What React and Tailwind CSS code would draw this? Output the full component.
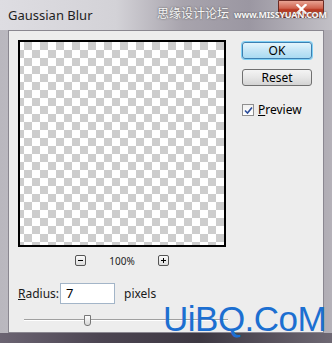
import React from "react";

function Checker() {
  return (
    <div className="w-[208px] h-[207px] border-2 border-black bg-white bg-[repeating-conic-gradient(#cdcdcd_0%_25%,#ffffff_0%_50%)] bg-[length:16px_16px] bg-[position:-4px_0px]" />
  );
}

export default function App() {
  return (
    <div
      className="relative w-[332px] h-[343px] overflow-hidden bg-[linear-gradient(90deg,#b9b7be_0%,#c8c6cc_30%,#9a96a0_55%,#8d8993_75%,#b4b1b8_100%)]"
      style={{ fontFamily: '"Noto Sans", "Liberation Sans", sans-serif' }}
    >
      {/* title bar */}
      <div className="relative h-[30px] flex items-center pl-[8px] bg-[linear-gradient(90deg,#dedde2_0%,#d3d2d7_35%,#a8a4ad_55%,#9b97a2_75%,#c2c0c6_100%)]">
        <span className="text-[13px] text-[#1e1e1e] leading-none">Gaussian Blur</span>
        <div className="absolute right-[8px] top-0 w-[46px] h-[18px] rounded-b-[4px] border border-[#6b2b24] bg-[linear-gradient(180deg,#e8a393_0%,#d0634e_45%,#b8361f_55%,#cf6a52_100%)] flex items-center justify-center">
          <svg width="11" height="10" viewBox="0 0 11 10">
            <path d="M1.5 1 L9.5 9 M9.5 1 L1.5 9" stroke="#ffffff" strokeWidth="2.4" strokeLinecap="square" />
          </svg>
        </div>
        <div className="absolute left-[157px] top-[7px] flex items-center gap-[5px] whitespace-nowrap">
          <span className="text-[12px] leading-none text-[#f6f6f6] [text-shadow:0_0_2px_#444]" style={{ fontFamily: '"Noto Sans CJK SC", sans-serif' }}>思缘设计论坛</span>
          <span className="text-[9px] font-bold leading-none text-[#f6f6f6] [text-shadow:0_0_2px_#444] tracking-tight mt-[3px]">www.MISSYUAN.COM</span>
        </div>
      </div>

      {/* client area */}
      <div className="ml-[8px] w-[316px] h-[303px] bg-[#ededed] border border-[#8a8790] flex pt-[9px] pl-[9px]">
        <div className="flex flex-col w-[208px]">
          <Checker />
          <div className="flex items-center justify-center gap-[23px] mt-[8px] h-[11px]">
            <div className="w-[11px] h-[11px] border border-[#555] rounded-[2px] bg-[linear-gradient(#fafafa,#dcdcdc)] flex items-center justify-center">
              <div className="w-[5px] h-px bg-black" />
            </div>
            <span className="text-[10px] text-[#222] leading-none">100%</span>
            <div className="w-[11px] h-[11px] border border-[#555] rounded-[2px] bg-[linear-gradient(#fafafa,#dcdcdc)] relative flex items-center justify-center">
              <div className="w-[5px] h-px bg-black" />
              <div className="absolute w-px h-[5px] bg-black" />
            </div>
          </div>
          <div className="flex items-center mt-[17px]">
            <span className="text-[12px] text-[#1a1a1a] leading-none w-[42px]"><span className="underline">R</span>adius:</span>
            <div className="w-[55px] h-[21px] border border-[#a3b5c8] bg-white flex items-center pl-[5px]">
              <span className="text-[13px] text-black leading-none">7</span>
            </div>
            <span className="text-[12px] text-[#1a1a1a] leading-none ml-[9px]">pixels</span>
          </div>
          <div className="relative mt-[11px] ml-[6px] w-[204px] h-[10px] flex items-center">
            <div className="w-full h-[2px] border-t border-[#a0a0a0] border-b border-b-white" />
            <div className="absolute left-[60px] top-0 w-[7px] h-[11px] border border-[#777] rounded-b-[3px] bg-[linear-gradient(#fdfdfd,#d6d6d6)]" />
          </div>
        </div>

        <div className="flex flex-col ml-[16px] mt-[2px]">
          <div className="w-[70px] h-[17px] rounded-[3px] border border-[#3c7fb1] shadow-[0_0_0_1px_#7fd0f5] bg-[linear-gradient(#e5f5fc,#c4e5f6_50%,#a9daf2)] flex items-center justify-center">
            <span className="text-[12px] text-black leading-none">OK</span>
          </div>
          <div className="w-[70px] h-[17px] mt-[10px] rounded-[3px] border border-[#707070] bg-[linear-gradient(#f4f4f4,#e6e6e6_50%,#d3d3d3)] flex items-center justify-center">
            <span className="text-[12px] text-black leading-none">Reset</span>
          </div>
          <div className="flex items-center mt-[18px] gap-[4px]">
            <div className="w-[12px] h-[12px] border border-[#8f8f8f] bg-[linear-gradient(#f0f0f0,#ffffff)] flex items-center justify-center">
              <svg width="9" height="9" viewBox="0 0 9 9">
                <path d="M1 4.5 L3.5 7 L8 1.5" fill="none" stroke="#2a4c9a" strokeWidth="1.6" />
              </svg>
            </div>
            <span className="text-[12px] text-black leading-none"><span className="underline">P</span>review</span>
          </div>
        </div>
      </div>

      {/* bottom frame */}
      <div className="absolute left-0 bottom-0 w-full h-[10px] bg-[linear-gradient(90deg,#6b6472,#4c4552_30%,#3d3842_60%,#6e6873_100%)]" />

      {/* watermark */}
      <div className="absolute left-[163px] top-[301px] text-[35px] leading-none text-[#1c6fd1] tracking-[-0.5px]" style={{ fontFamily: '"Liberation Sans", sans-serif' }}>
        UiBQ.CoM
      </div>
    </div>
  );
}
